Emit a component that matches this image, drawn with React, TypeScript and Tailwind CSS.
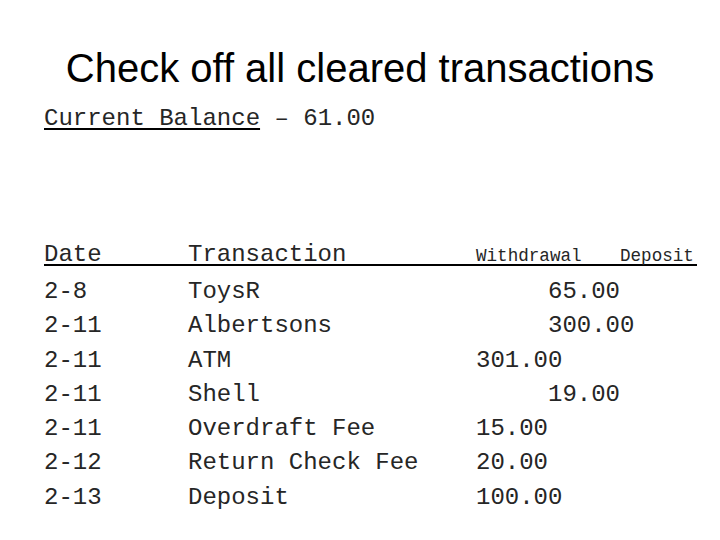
const rows = [
  { date: '2-8', what: 'ToysR', amount: '65.00', deposit: true },
  { date: '2-11', what: 'Albertsons', amount: '300.00', deposit: true },
  { date: '2-11', what: 'ATM', amount: '301.00', deposit: false },
  { date: '2-11', what: 'Shell', amount: '19.00', deposit: true },
  { date: '2-11', what: 'Overdraft Fee', amount: '15.00', deposit: false },
  { date: '2-12', what: 'Return Check Fee', amount: '20.00', deposit: false },
  { date: '2-13', what: 'Deposit', amount: '100.00', deposit: false },
];

export default function App() {
  return (
    <div className="w-[720px] h-[540px] bg-white text-black overflow-hidden">
      <h1 className="pt-[46px] text-center text-[40px] leading-[44px] font-['Liberation_Sans',Arial,sans-serif]">
        Check off all cleared transactions
      </h1>

      <div className="pl-[44px] font-['Liberation_Mono','Courier_New',monospace] text-[24px] text-[#262626]">
        <div className="mt-[12px] leading-[34px] whitespace-pre">
          <span className="underline decoration-2 underline-offset-[3px] decoration-black">Current Balance</span> – 61.00
        </div>

        <div className="mt-[111px] w-[653px] flex items-baseline leading-[16px] border-b-2 border-black">
          <span className="w-[144px]">Date</span>
          <span className="w-[288px]">Transaction</span>
          <span className="w-[144px] text-[17.6px]">Withdrawal</span>
          <span className="text-[17.6px]">Deposit</span>
        </div>

        <div className="mt-[9px] flex flex-col">
          {rows.map((r, i) => (
            <div key={i} className="flex leading-[34.3px] whitespace-pre">
              <span className="w-[144px]">{r.date}</span>
              <span className="w-[288px]">{r.what}</span>
              <span className={r.deposit ? 'pl-[72px]' : ''}>{r.amount}</span>
            </div>
          ))}
        </div>
      </div>
    </div>
  );
}
